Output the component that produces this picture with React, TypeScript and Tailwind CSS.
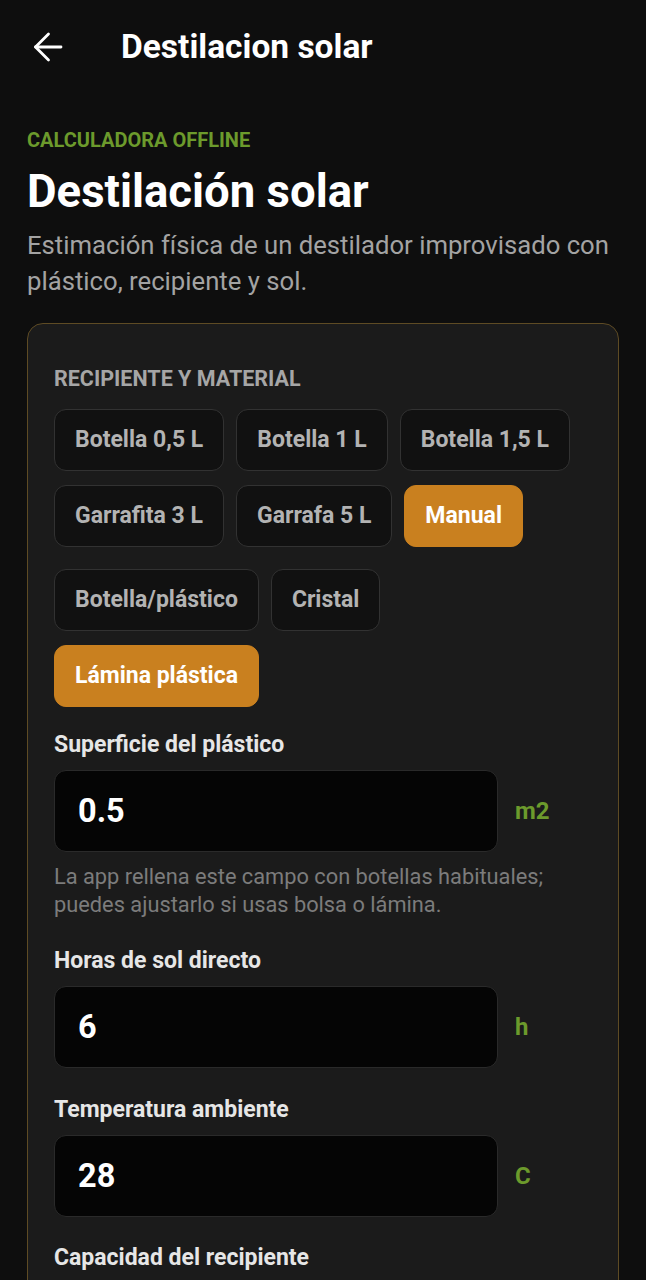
const GROUP_A = [
  { label: "Botella 0,5 L" },
  { label: "Botella 1 L" },
  { label: "Botella 1,5 L" },
  { label: "Garrafita 3 L" },
  { label: "Garrafa 5 L" },
  { label: "Manual", active: true },
];

const GROUP_B = [
  { label: "Botella/plástico" },
  { label: "Cristal" },
  { label: "Lámina plástica", active: true },
];

function BackArrow() {
  return (
    <svg
      viewBox="0 0 30 30"
      className="h-[30px] w-[30px]"
      fill="none"
      stroke="white"
      strokeWidth={2.8}
      strokeLinecap="round"
      strokeLinejoin="round"
    >
      <path d="M28 15H2.5" />
      <path d="M15.5 2 2.5 15l13 13" />
    </svg>
  );
}

function Chip({ label, active }: { label: string; active?: boolean }) {
  return (
    <button
      className={
        active
          ? "flex h-[62px] items-center rounded-[12px] border border-[#c9801f] bg-[#c9801f] px-5 text-[23px] font-bold text-white"
          : "flex h-[62px] items-center rounded-[12px] border border-[#323232] bg-[#111111] px-5 text-[23px] font-bold text-[#b3b3b3]"
      }
    >
      {label}
    </button>
  );
}

function Field({
  label,
  value,
  unit,
  help,
  className = "",
}: {
  label: string;
  value?: string;
  unit?: string;
  help?: string;
  className?: string;
}) {
  return (
    <div className={className}>
      <div className="text-[23px] font-bold leading-[28px] text-[#e6e6e6]">{label}</div>
      <div className="mt-[11px] flex items-center gap-[17px]">
        <div className="flex h-[82px] flex-1 items-center rounded-[12px] border border-[#2a2a2a] bg-[#050505] px-[23px] text-[32.5px] font-bold text-white">
          {value}
        </div>
        <div className="w-[77px] text-[24px] font-bold text-[#6c9a2c]">{unit}</div>
      </div>
      {help && (
        <p className="mt-[11px] text-[21.8px] leading-[28px] text-[#7c7c7c]">{help}</p>
      )}
    </div>
  );
}

export default function App() {
  return (
    <div className="min-h-screen bg-[#0e0e0e] font-['Roboto',sans-serif]">
      {/* top bar */}
      <header className="flex h-[94px] items-center">
        <div className="ml-[33px]">
          <BackArrow />
        </div>
        <h1 className="ml-[58px] text-[33.5px] font-bold leading-[40px] text-white">
          Destilacion solar
        </h1>
      </header>

      <main className="px-[27px] pt-[34px]">
        <div className="text-[20px] font-bold uppercase leading-[24px] text-[#6c9a2c]">
          Calculadora offline
        </div>
        <h2 className="mt-[16px] text-[45.5px] font-bold leading-[48px] text-white">
          Destilación solar
        </h2>
        <p className="mt-[11px] text-[25.7px] leading-[36px] text-[#a3a3a3]">
          Estimación física de un destilador improvisado con plástico, recipiente y sol.
        </p>

        <section className="mt-[24px] rounded-[16px] border border-[#5e4b24] bg-[#1b1b1b] px-[26px] pb-10 pt-[43px]">
          <div className="text-[21.5px] font-bold uppercase leading-[24px] text-[#a6a6a6]">
            Recipiente y material
          </div>

          <div className="mt-[18px] flex flex-wrap gap-x-3 gap-y-[14px]">
            {GROUP_A.map((c) => (
              <Chip key={c.label} {...c} />
            ))}
          </div>
          <div className="mt-[22px] flex flex-wrap gap-x-3 gap-y-[14px]">
            {GROUP_B.map((c) => (
              <Chip key={c.label} {...c} />
            ))}
          </div>

          <Field
            className="mt-[24px]"
            label="Superficie del plástico"
            value="0.5"
            unit="m2"
            help="La app rellena este campo con botellas habituales; puedes ajustarlo si usas bolsa o lámina."
          />
          <Field className="mt-[28px]" label="Horas de sol directo" value="6" unit="h" />
          <Field className="mt-[28px]" label="Temperatura ambiente" value="28" unit="C" />
          <Field className="mt-[27px]" label="Capacidad del recipiente" />
        </section>
      </main>
    </div>
  );
}
